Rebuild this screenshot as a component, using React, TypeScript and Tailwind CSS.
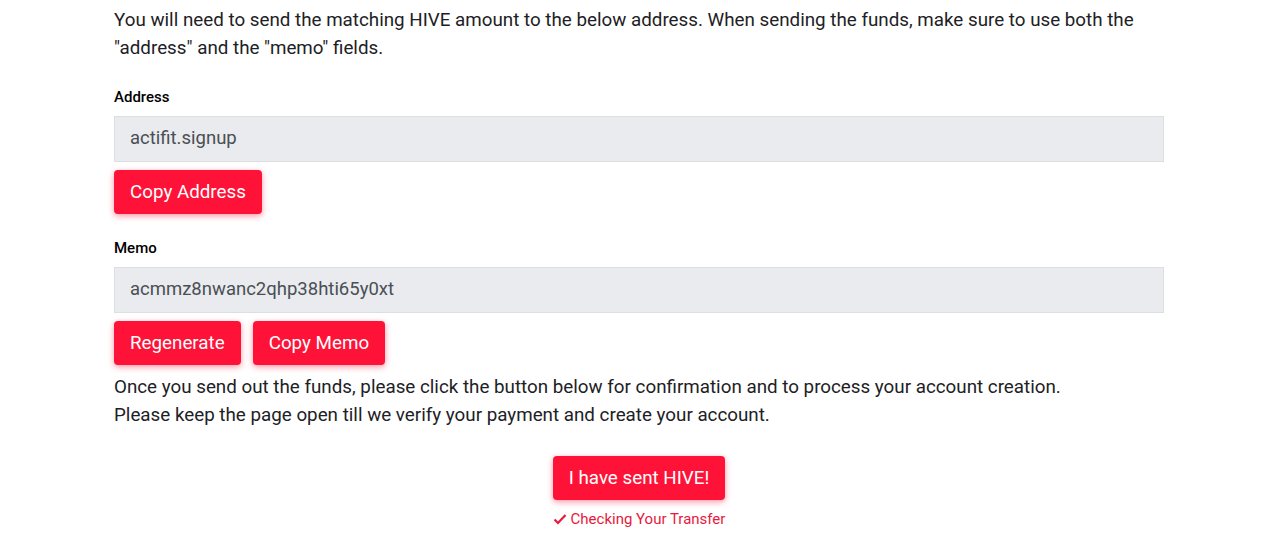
import React from "react";

const btn =
  "rounded-[4px] bg-[#ff1238] px-4 h-[44px] text-[18.8px] text-white shadow-[0_2px_6px_rgba(255,18,56,0.45)]";

export default function App() {
  return (
    <div className="w-full bg-white font-['Roboto',sans-serif] text-[#1d2125]">
      <div className="ml-[114px] w-[1050px] pt-[6px]">
        <p className="text-[18.8px] leading-[28px]">
          You will need to send the matching HIVE amount to the below address. When sending the funds, make sure to use both the
          "address" and the "memo" fields.
        </p>

        <label className="mt-[26px] block text-[15px] font-medium leading-[18px] text-black">Address</label>
        <div className="mt-[10px] flex h-[46px] items-center border border-[#dcdee2] bg-[#e9ebee] px-[15px] text-[18.5px] text-[#4a4f55]">
          actifit.signup
        </div>
        <div className="mt-[8px] flex">
          <button className={btn}>Copy Address</button>
        </div>

        <label className="mt-[25px] block text-[15px] font-medium leading-[18px] text-black">Memo</label>
        <div className="mt-[10px] flex h-[46px] items-center border border-[#dcdee2] bg-[#e9ebee] px-[15px] text-[18.5px] text-[#4a4f55]">
          acmmz8nwanc2qhp38hti65y0xt
        </div>
        <div className="mt-[8px] flex gap-3">
          <button className={btn}>Regenerate</button>
          <button className={btn}>Copy Memo</button>
        </div>

        <p className="mt-[8px] text-[18.8px] leading-[28px]">
          Once you send out the funds, please click the button below for confirmation and to process your account creation.
          <br />
          Please keep the page open till we verify your payment and create your account.
        </p>

        <div className="mt-[27px] flex flex-col items-center">
          <button className={btn}>I have sent HIVE!</button>
          <div className="mt-[8px] flex items-center gap-[4px] text-[15px] text-[#e8193c]">
            <svg width="14" height="12" viewBox="0 0 14 12" fill="none">
              <path d="M1.5 6.5 L5 10 L12.5 2" stroke="currentColor" strokeWidth="2.2" />
            </svg>
            Checking Your Transfer
          </div>
        </div>
      </div>
    </div>
  );
}
